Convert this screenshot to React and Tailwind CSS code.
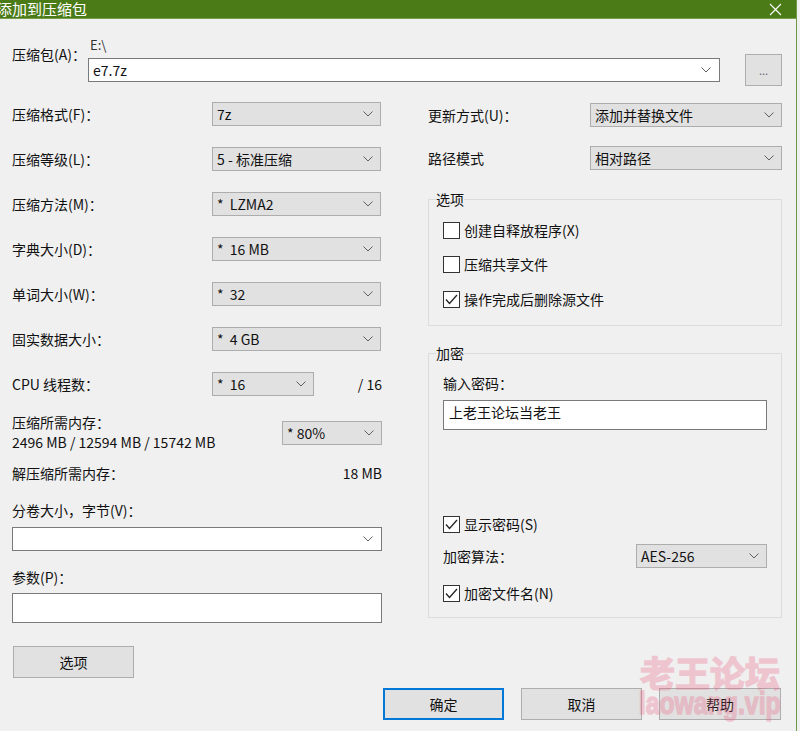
import React from 'react';

const Chevron = () => (
  <svg width="10" height="6" viewBox="0 0 10 6" className="shrink-0">
    <path d="M0.5 0.5 L5 5 L9.5 0.5" fill="none" stroke="#5f5f5f" strokeWidth="1" />
  </svg>
);

// gray dropdown (read-only combo)
const Select = ({ value, className = '' }) => (
  <div
    className={`h-[24px] flex items-center justify-between bg-[#e1e1e1] border border-[#adadad] pl-[4px] pr-[7px] ${className}`}
  >
    <span className="leading-[20px] whitespace-pre">{value}</span>
    <Chevron />
  </div>
);

const Checkbox = ({ checked, label }) => (
  <div className="flex items-center h-[20px]">
    <div className="w-[17px] h-[17px] border border-[#333] bg-white flex items-center justify-center">
      {checked && (
        <svg width="13" height="11" viewBox="0 0 13 11">
          <path d="M1 5.5 L4.5 9.5 L12 1" fill="none" stroke="#222" strokeWidth="1.3" />
        </svg>
      )}
    </div>
    <span className="ml-[4px] leading-[20px]">{label}</span>
  </div>
);

const Button = ({ children, primary, className = '' }) => (
  <div
    className={`w-[121px] h-[32px] flex items-center justify-center bg-[#e1e1e1] ${
      primary ? 'border-2 border-[#0078d7]' : 'border border-[#adadad]'
    } ${className}`}
  >
    {children}
  </div>
);

const Row = ({ label, value }) => (
  <div className="flex items-center h-[24px]">
    <span className="w-[200px] leading-[20px]">{label}</span>
    <Select value={value} className="w-[169px]" />
  </div>
);

export default function App() {
  return (
    <div className="w-[800px] h-[731px] bg-[#f0f0f0] flex text-[14px] text-[#111] font-['Noto_Sans_CJK_SC','Noto_Sans',sans-serif] relative overflow-hidden">
      <div className="w-[797px] h-full border-r border-[#6f9a45] flex flex-col">
        {/* title bar */}
        <div className="h-[19px] bg-[#4a7b17] border-b border-[#78a04c] flex items-center justify-between text-white">
          <span className="-ml-[3px] text-[15px] leading-[18px]">添加到压缩包</span>
          <svg width="13" height="13" viewBox="0 0 13 13" className="mr-[14px]">
            <path d="M1 1 L12 12 M12 1 L1 12" stroke="#fff" strokeWidth="1.1" />
          </svg>
        </div>

        {/* archive path */}
        <div className="flex pl-[12px] pt-[17px]">
          <span className="w-[76px] mt-[8px] leading-[20px]">压缩包(A)：</span>
          <div className="flex flex-col w-[632px]">
            <span className="h-[18px] leading-[18px] text-[13px] text-[#333] ml-[2px]">E:\</span>
            <div className="mt-[4px] h-[24px] bg-white border border-[#7a7a7a] flex items-center justify-between pl-[4px] pr-[8px]">
              <span className="leading-[20px]">e7.7z</span>
              <Chevron />
            </div>
          </div>
          <div className="ml-[25px] mt-[18px] w-[37px] h-[32px] bg-[#e1e1e1] border border-[#adadad] flex items-center justify-center text-[11px] text-[#666]">
            ...
          </div>
        </div>

        <div className="flex mt-[16px]">
          {/* left column */}
          <div className="ml-[12px] w-[370px] flex flex-col">
            <div className="flex flex-col gap-[21px]">
              <Row label="压缩格式(F)：" value="7z" />
              <Row label="压缩等级(L)：" value="5 - 标准压缩" />
              <Row label="压缩方法(M)：" value="*  LZMA2" />
              <Row label="字典大小(D)：" value="*  16 MB" />
              <Row label="单词大小(W)：" value="*  32" />
              <Row label="固实数据大小：" value="*  4 GB" />
              <div className="flex items-center h-[24px]">
                <span className="w-[200px] leading-[20px]">CPU 线程数：</span>
                <Select value="*  16" className="w-[102px]" />
                <span className="flex-1 text-right leading-[20px]">/ 16</span>
              </div>
            </div>

            <div className="mt-[16px] flex justify-between">
              <div className="flex flex-col leading-[20px]">
                <span>压缩所需内存：</span>
                <span>2496 MB / 12594 MB / 15742 MB</span>
              </div>
              <Select value="* 80%" className="w-[100px] mt-[9px]" />
            </div>

            <div className="mt-[11px] flex justify-between leading-[20px]">
              <span>解压缩所需内存：</span>
              <span>18 MB</span>
            </div>

            <span className="mt-[17px] leading-[20px]">分卷大小，字节(V)：</span>
            <div className="mt-[7px] h-[24px] bg-white border border-[#7a7a7a] flex items-center justify-end pr-[8px]">
              <Chevron />
            </div>

            <span className="mt-[16px] leading-[20px]">参数(P)：</span>
            <div className="mt-[6px] h-[30px] bg-white border border-[#7a7a7a]" />

            <Button className="mt-[23px] ml-px">选项</Button>
          </div>

          {/* right column */}
          <div className="ml-[46px] w-[354px] flex flex-col">
            <div className="flex items-center h-[23px] mt-px">
              <span className="w-[162px] leading-[20px]">更新方式(U)：</span>
              <Select value="添加并替换文件" className="w-[192px] h-[23px]" />
            </div>
            <div className="flex items-center h-[23px] mt-[20px]">
              <span className="w-[162px] leading-[20px]">路径模式</span>
              <Select value="相对路径" className="w-[192px] h-[23px]" />
            </div>

            <fieldset className="mt-[20px] h-[137px] border border-[#dcdcdc] px-[7px]">
              <legend className="leading-[20px] px-0">选项</legend>
              <div className="ml-[7px] mt-[11px] flex flex-col">
                <Checkbox label="创建自释放程序(X)" />
                <div className="mt-[14px]">
                  <Checkbox label="压缩共享文件" />
                </div>
                <div className="mt-[15px]">
                  <Checkbox checked label="操作完成后删除源文件" />
                </div>
              </div>
            </fieldset>

            <fieldset className="mt-[17px] h-[275px] border border-[#dcdcdc] px-[7px]">
              <legend className="leading-[20px] px-0">加密</legend>
              <div className="ml-[7px] mr-[7px] flex flex-col">
                <span className="mt-[10px] leading-[20px]">输入密码：</span>
                <div className="mt-[7px] h-[30px] bg-white border border-[#7a7a7a] pl-[5px] pt-[1px] leading-[20px]">
                  上老王论坛当老王
                </div>
                <div className="mt-[84px]">
                  <Checkbox checked label="显示密码(S)" />
                </div>
                <div className="mt-[10px] flex items-center justify-between h-[24px]">
                  <span className="leading-[20px]">加密算法：</span>
                  <Select value="AES-256" className="w-[131px]" />
                </div>
                <div className="mt-[15px]">
                  <Checkbox checked label="加密文件名(N)" />
                </div>
              </div>
            </fieldset>
          </div>
        </div>

        {/* dialog buttons */}
        <div className="mt-[10px] flex pl-[383px] gap-[17px]">
          <Button primary>确定</Button>
          <Button>取消</Button>
          <Button className="w-[122px]">帮助</Button>
        </div>
      </div>

      {/* site watermark */}
      <div className="absolute left-[640px] top-[654px] w-[140px] flex flex-col items-center pointer-events-none opacity-[0.28] text-[#ec5a7d] [-webkit-text-stroke:1.5px_#ec5a7d] font-bold leading-none">
        <span className="text-[35px]">老王论坛</span>
        <span className="text-[31px] font-['Liberation_Sans',sans-serif] scale-x-[0.8] -mt-[1px]">laowang.vip</span>
      </div>
    </div>
  );
}
